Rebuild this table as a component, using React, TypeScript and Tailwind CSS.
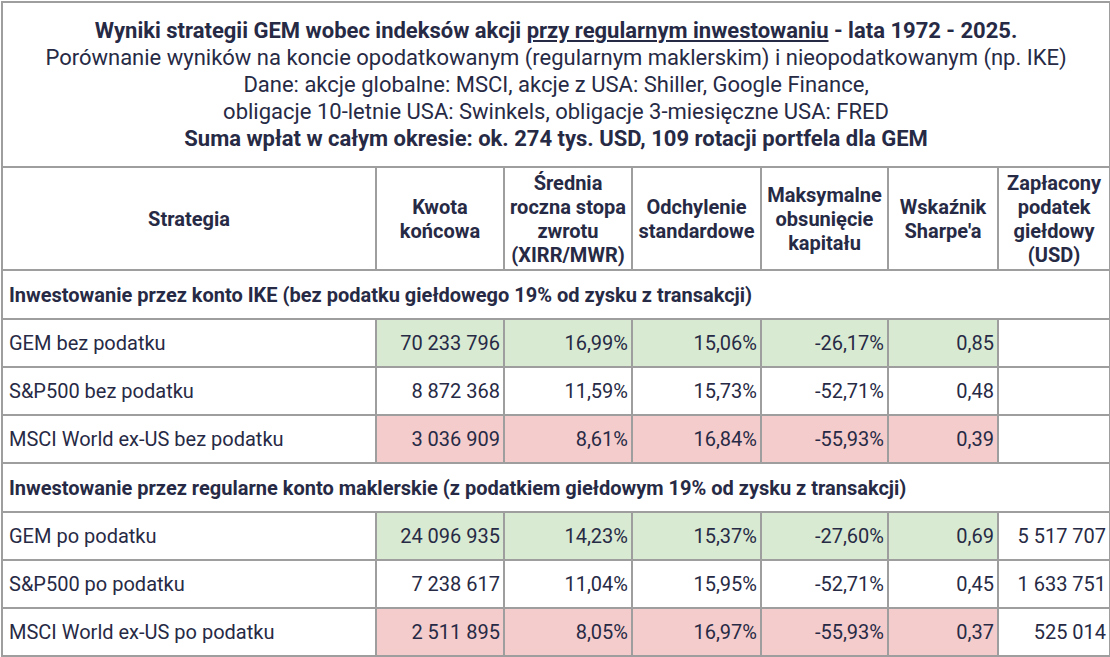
const GREEN = 'bg-[#d9ead3]';
const RED = 'bg-[#f4cccc]';

type Row = {
  name: string;
  values: string[];
  tax: string;
  tone: 'good' | 'bad' | 'none';
};

const IKE_ROWS: Row[] = [
  { name: 'GEM bez podatku', values: ['70 233 796', '16,99%', '15,06%', '-26,17%', '0,85'], tax: '', tone: 'good' },
  { name: 'S&P500 bez podatku', values: ['8 872 368', '11,59%', '15,73%', '-52,71%', '0,48'], tax: '', tone: 'none' },
  { name: 'MSCI World ex-US bez podatku', values: ['3 036 909', '8,61%', '16,84%', '-55,93%', '0,39'], tax: '', tone: 'bad' },
];

const TAX_ROWS: Row[] = [
  { name: 'GEM po podatku', values: ['24 096 935', '14,23%', '15,37%', '-27,60%', '0,69'], tax: '5 517 707', tone: 'good' },
  { name: 'S&P500 po podatku', values: ['7 238 617', '11,04%', '15,95%', '-52,71%', '0,45'], tax: '1 633 751', tone: 'none' },
  { name: 'MSCI World ex-US po podatku', values: ['2 511 895', '8,05%', '16,97%', '-55,93%', '0,37'], tax: '525 014', tone: 'bad' },
];

const cell = 'border-2 border-[#9e9e9e]';

function DataRow({ row }: { row: Row }) {
  const tone = row.tone === 'good' ? GREEN : row.tone === 'bad' ? RED : '';
  return (
    <tr className="h-[48px]">
      <td className={`${cell} px-[6px] text-left`}>{row.name}</td>
      {row.values.map((v, i) => (
        <td key={i} className={`${cell} ${tone} pr-[3px] text-right`}>
          {v}
        </td>
      ))}
      <td className={`${cell} pr-[3px] text-right`}>{row.tax}</td>
    </tr>
  );
}

function SectionRow({ label }: { label: string }) {
  return (
    <tr className="h-[49px]">
      <td colSpan={7} className={`${cell} px-[6px] text-left font-bold`}>
        {label}
      </td>
    </tr>
  );
}

export default function App() {
  return (
    <div
      className="min-h-screen bg-white pl-px pt-px text-[20px] text-[#272a45]"
      style={{ fontFamily: 'Roboto, "Liberation Sans", sans-serif' }}
    >
      <table className="w-[1108px] table-fixed border-collapse leading-[24px]">
        <colgroup>
          <col className="w-[374px]" />
          <col className="w-[128px]" />
          <col className="w-[128px]" />
          <col className="w-[129px]" />
          <col className="w-[127px]" />
          <col className="w-[110px]" />
          <col className="w-[112px]" />
        </colgroup>
        <tbody>
          {/* Title */}
          <tr className="h-[165px]">
            <td colSpan={7} className={`${cell} text-center text-[22px] leading-[27px]`}>
              <div className="font-bold">
                Wyniki strategii GEM wobec indeksów akcji{' '}
                <span className="underline underline-offset-2">przy regularnym inwestowaniu</span> - lata 1972 - 2025.
              </div>
              <div>Porównanie wyników na koncie opodatkowanym (regularnym maklerskim) i nieopodatkowanym (np. IKE)</div>
              <div>Dane: akcje globalne: MSCI, akcje z USA: Shiller, Google Finance,</div>
              <div>obligacje 10-letnie USA: Swinkels, obligacje 3-miesięczne USA: FRED</div>
              <div className="font-bold">Suma wpłat w całym okresie: ok. 274 tys. USD, 109 rotacji portfela dla GEM</div>
            </td>
          </tr>

          {/* Column headers */}
          <tr className="h-[103px] text-center font-bold">
            <td className={cell}>Strategia</td>
            <td className={cell}>
              Kwota
              <br />
              końcowa
            </td>
            <td className={cell}>
              Średnia
              <br />
              roczna stopa
              <br />
              zwrotu
              <br />
              (XIRR/MWR)
            </td>
            <td className={cell}>
              Odchylenie
              <br />
              standardowe
            </td>
            <td className={cell}>
              Maksymalne
              <br />
              obsunięcie
              <br />
              kapitału
            </td>
            <td className={cell}>
              Wskaźnik
              <br />
              Sharpe'a
            </td>
            <td className={cell}>
              Zapłacony
              <br />
              podatek
              <br />
              giełdowy
              <br />
              (USD)
            </td>
          </tr>

          <SectionRow label="Inwestowanie przez konto IKE (bez podatku giełdowego 19% od zysku z transakcji)" />
          {IKE_ROWS.map((r) => (
            <DataRow key={r.name} row={r} />
          ))}

          <SectionRow label="Inwestowanie przez regularne konto maklerskie (z podatkiem giełdowym 19% od zysku z transakcji)" />
          {TAX_ROWS.map((r) => (
            <DataRow key={r.name} row={r} />
          ))}
        </tbody>
      </table>
    </div>
  );
}
